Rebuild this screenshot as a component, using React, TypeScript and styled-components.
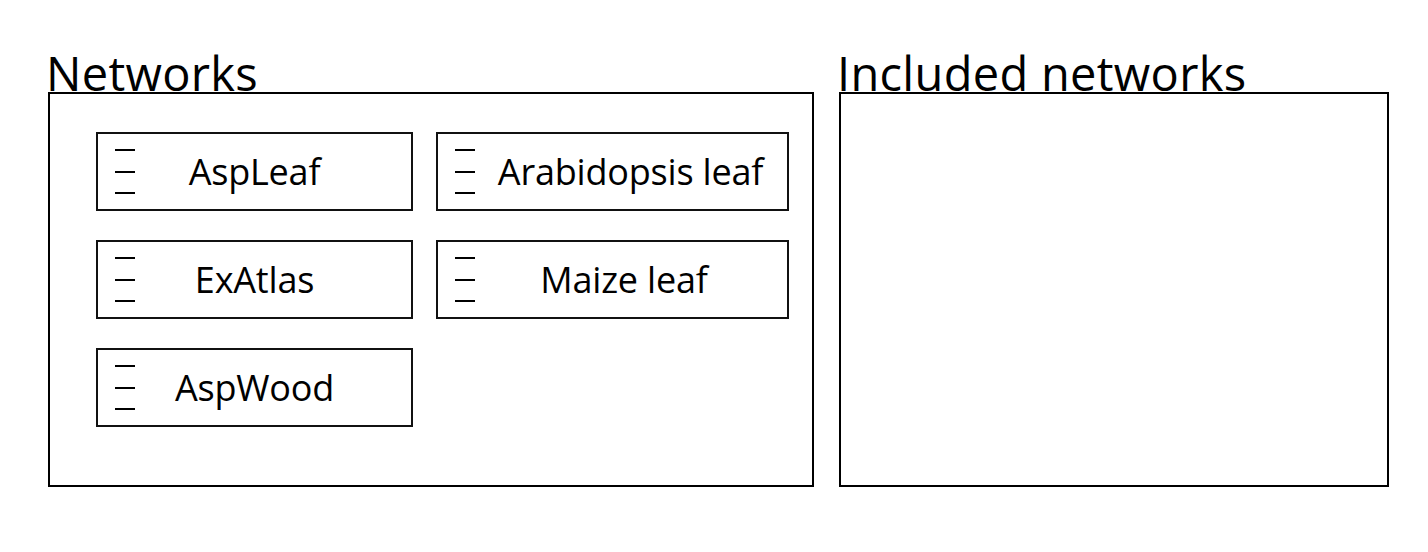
import styled, { createGlobalStyle } from "styled-components";

const GlobalStyle = createGlobalStyle`
  body {
    margin: 0;
    background: #fff;
    font-family: "Open Sans", "Noto Sans", sans-serif;
    color: #000;
  }
`;

const Page = styled.div`
  display: flex;
  align-items: flex-start;
  gap: 25px;
  padding: 50px 0 0 48px;
`;

const Section = styled.section`
  display: flex;
  flex-direction: column;
`;

const Title = styled.h2`
  margin: 0 0 -4px -2px;
  font-size: 47px;
  font-weight: 400;
  line-height: 46px;
  letter-spacing: 0.3px;
  position: relative;
  z-index: 1;
`;

const Panel = styled.div<{ $width: number }>`
  box-sizing: border-box;
  width: ${(p) => p.$width}px;
  height: 395px;
  border: 2px solid #000;
`;

const Grid = styled.div`
  display: grid;
  grid-template-columns: 317px 353px;
  column-gap: 23px;
  row-gap: 29px;
  padding: 38px 0 0 46px;
  align-items: start;
`;

const Item = styled.div`
  box-sizing: border-box;
  height: 79px;
  display: flex;
  align-items: center;
  padding-left: 17px;
  border: 2px solid #111;
`;

const Handle = styled.div`
  width: 20px;
  height: 45px;
  display: flex;
  flex-direction: column;
  justify-content: space-between;
  span {
    display: block;
    height: 2px;
    background: #000;
  }
`;

const Label = styled.span<{ $padRight: number }>`
  flex: 1;
  text-align: center;
  padding-right: ${(p) => p.$padRight}px;
  font-size: 36px;
  line-height: 1;
  letter-spacing: -0.2px;
  white-space: nowrap;
`;

interface INetwork {
  id: string;
  name: string;
  padRight: number;
}

const networks: INetwork[] = [
  { id: "aspleaf", name: "AspLeaf", padRight: 37 },
  { id: "arabidopsis", name: "Arabidopsis leaf", padRight: 1 },
  { id: "exatlas", name: "ExAtlas", padRight: 37 },
  { id: "maize", name: "Maize leaf", padRight: 14 },
  { id: "aspwood", name: "AspWood", padRight: 37 },
];

function App() {
  return (
    <>
      <GlobalStyle />
      <Page>
        <Section>
          <Title>Networks</Title>
          <Panel $width={766}>
            <Grid>
              {networks.map((n) => (
                <Item key={n.id}>
                  <Handle>
                    <span />
                    <span />
                    <span />
                  </Handle>
                  <Label $padRight={n.padRight}>{n.name}</Label>
                </Item>
              ))}
            </Grid>
          </Panel>
        </Section>
        <Section>
          <Title>Included networks</Title>
          <Panel $width={550} />
        </Section>
      </Page>
    </>
  );
}

export default App;
